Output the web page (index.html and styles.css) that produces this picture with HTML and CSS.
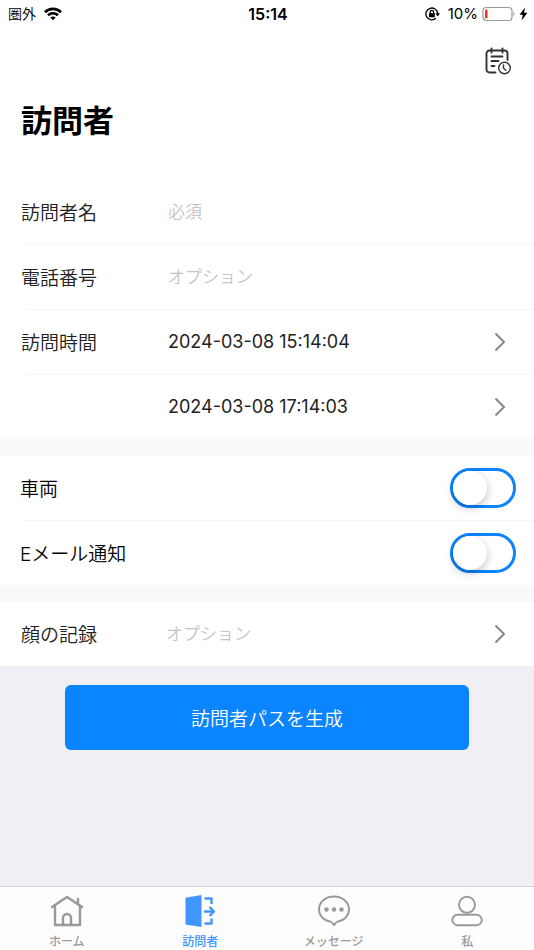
FILE: index.html
```html
<!DOCTYPE html>
<html lang="ja">
<head>
    <meta charset="UTF-8">
    <meta name="viewport" content="width=device-width, initial-scale=1.0">
    <title>訪問者</title>
    <link rel="stylesheet" href="styles.css">
</head>
<body>
    <div class="status-bar">
        <div class="status-left">
            <span>圏外</span>
            <svg width="18" height="14" viewBox="0 0 18 14" fill="none" stroke="#000" stroke-width="2.6">
                <path d="M1 5.2C5.5.8 12.5.8 17 5.2"/>
                <path d="M4 8.3c2.8-2.7 7.2-2.7 10 0"/>
                <path d="M6.4 10.6c1.5-1.4 3.7-1.4 5.2 0L9 13.2z" fill="#000" stroke="none"/>
            </svg>
        </div>
        <div class="status-time">15:14</div>
        <div class="status-right">
            <svg class="lock-icon" width="15" height="14" viewBox="0 0 15 14" fill="none" stroke="#000" stroke-width="1.3">
                <path d="M10.9 11.2A5.9 5.9 0 1 1 12.7 6.5"/>
                <path d="M10.4 6.2H15l-2.3 3.2z" fill="#000" stroke="none"/>
                <path d="M4 6.2h5.8v4.1H4z" fill="#000" stroke="none"/>
                <path d="M5.2 6.5V5a1.7 1.7 0 0 1 3.4 0v1.5"/>
            </svg>
            <span>10%</span>
            <svg width="33" height="16" viewBox="0 0 33 16">
                <rect x="1" y="1.5" width="29" height="13" rx="3.5" fill="none" stroke="#999" stroke-width="1.2"/>
                <rect x="3" y="3.5" width="2.5" height="9" rx="1" fill="#ff2d20"/>
                <path d="M31.5 5.5q2 2.5 0 5z" fill="#999"/>
            </svg>
            <svg width="9" height="14" viewBox="0 0 9 14"><path d="M6 .5.5 7.8h3.3L2.6 13.5 8.5 5.8H5.1z"/></svg>
        </div>
    </div>

    <header class="header">
        <button type="button" class="history-btn" aria-label="履歴">
            <svg width="28" height="28" viewBox="0 0 28 28" fill="none" stroke="#333" stroke-width="1.9" stroke-linecap="round">
                <path d="M11.5 25.5h-6a3 3 0 0 1-3-3v-16a3 3 0 0 1 3-3h15a3 3 0 0 1 3 3V13"/>
                <path d="M7.5 1.5v4M18.5 1.500v4M7.500 9.500h11M7.500 14h7M7.500 19h3"/>
                <circle cx="20.5" cy="21" r="5.8" stroke-width="1.4"/>
                <path d="M19.5 18v3.2l2.3 2" stroke-width="1.4"/>
            </svg>
        </button>
        <h1>訪問者</h1>
    </header>

    <form class="visitor-form">
        <div class="group">
            <div class="row">
                <label for="name">訪問者名</label>
                <input type="text" id="name" class="value" placeholder="必須">
            </div>
            <div class="row">
                <label for="phone">電話番号</label>
                <input type="tel" id="phone" class="value" placeholder="オプション">
            </div>
            <div class="row">
                <label for="start-time">訪問時間</label>
                <button type="button" id="start-time" class="value">
                    2024-03-08 15:14:04
                    <svg class="chevron" width="12" height="20" viewBox="0 0 12 20"><path d="m1.5 1.5 8.5 8.5-8.5 8.5"/></svg>
                </button>
            </div>
            <div class="row">
                <label for="end-time"></label>
                <button type="button" id="end-time" class="value">
                    2024-03-08 17:14:03
                    <svg class="chevron" width="12" height="20" viewBox="0 0 12 20"><path d="m1.5 1.5 8.5 8.5-8.5 8.5"/></svg>
                </button>
            </div>
        </div>

        <div class="group">
            <div class="row row-switch">
                <label for="car">車両</label>
                <input type="checkbox" role="switch" id="car" class="switch">
            </div>
            <div class="row row-switch">
                <label for="email">Eメール通知</label>
                <input type="checkbox" role="switch" id="email" class="switch">
            </div>
        </div>

        <div class="group">
            <div class="row row-face">
                <label for="face">顔の記録</label>
                <button type="button" id="face" class="value value-empty">
                    <span>オプション</span>
                    <svg class="chevron" width="12" height="20" viewBox="0 0 12 20"><path d="m1.5 1.5 8.5 8.5-8.5 8.5"/></svg>
                </button>
            </div>
        </div>

        <div class="actions">
            <button type="submit" class="btn-primary">訪問者パスを生成</button>
        </div>
    </form>

    <nav class="tab-bar">
        <a href="#home" class="tab">
            <svg width="34" height="34" viewBox="0 0 34 34" fill="none" stroke="currentColor" stroke-width="2.4" stroke-linecap="round" stroke-linejoin="round">
                <path d="M2 13 17 3l15 10M5 11.5V31h25V11.5M28 10V5"/>
                <path d="M13 31v-7a4 4 0 0 1 8 0v7"/>
            </svg>
            <span>ホーム</span>
        </a>
        <a href="#visitor" class="tab active">
            <svg width="34" height="34" viewBox="0 0 34 34" fill="none" stroke="currentColor" stroke-width="2.4" stroke-linejoin="round">
                <path d="M2.5 3.7 18.500 1v32l-16-2.500z" fill="currentColor" stroke="none"/>
                <path d="M21.5 4.5h7V10M28.5 24.500v5h-7M21 17.500h10M26.500 13l4.500 4.500-4.500 4.500"/>
            </svg>
            <span>訪問者</span>
        </a>
        <a href="#message" class="tab">
            <svg width="34" height="34" viewBox="0 0 34 34" fill="none" stroke="currentColor" stroke-width="1.9" stroke-linejoin="round">
                <path d="M13.5 27.6C6.5 26.5 2 21.5 2 15.5 2 8 8.5 2.5 17 2.500S32 8 32 15.500c0 6-4.500 11-11.500 12.100-1.500.3-2 1.400-2.500 2.400q-.9 2.200-2 0c-.5-1-1-2.100-2.500-2.400z"/>
                <g fill="currentColor" stroke="none"><circle cx="9.5" cy="15.5" r="2.2"/><circle cx="17" cy="15.5" r="2.2"/><circle cx="24.5" cy="15.5" r="2.2"/></g>
            </svg>
            <span>メッセージ</span>
        </a>
        <a href="#me" class="tab">
            <svg width="34" height="34" viewBox="0 0 34 34" fill="none" stroke="currentColor" stroke-width="1.9">
                <circle cx="17" cy="10.800" r="8"/>
                <rect x="2.3" y="20.8" width="29.5" height="10.4" rx="5.2"/>
            </svg>
            <span>私</span>
        </a>
    </nav>
</body>
</html>
```
FILE: styles.css
```css
:root {
    --blue: #0a84ff;
    --text: #222;
    --placeholder: #c5c5c9;
    --line: #f5f5f5;
    --gap: #f9f9f9;
    --page: #efeff4;
}

* {
    box-sizing: border-box;
}

body {
    display: flex;
    flex-direction: column;
    min-height: 100vh;
    margin: 0;
    background-color: var(--page);
    color: var(--text);
    font-family: Inter, "Noto Sans CJK JP", sans-serif;
    font-weight: 350;
}

button,
input {
    font: inherit;
}

button {
    padding: 0;
    border: none;
    background: none;
    cursor: pointer;
}

svg {
    display: block;
    flex: none;
}

/* Status bar */
.status-bar {
    display: grid;
    grid-template-columns: 1fr auto 1fr;
    align-items: center;
    height: 28px;
    padding: 0 6px 0 8px;
    background-color: #fff;
    color: #000;
    font-size: 14px;
    line-height: 20px;
}

.status-left,
.status-right {
    display: flex;
    align-items: center;
    gap: 8px;
}

.status-right {
    justify-content: flex-end;
    gap: 4px;
    font-size: 15px;
    font-weight: 400;
}

.lock-icon {
    margin-right: 4px;
}

.status-time {
    font-size: 16px;
    font-weight: 600;
}

/* Header */
.header {
    display: flex;
    flex-direction: column;
    height: 152px;
    padding: 19px 22px 0 21px;
    background-color: #fff;
}

.history-btn {
    align-self: flex-end;
}

h1 {
    margin: 22px 0 0;
    color: #000;
    font-size: 31px;
    font-weight: 700;
    line-height: 48px;
}

/* Form */
.visitor-form {
    flex: 1;
}

.group {
    background-color: #fff;
}

.group + .group {
    border-top: 17px solid var(--gap);
}

.row {
    display: flex;
    align-items: center;
    height: 64px;
    padding: 0 28px 0 21px;
}

.row + .row {
    height: 65px;
    background: linear-gradient(var(--line), var(--line)) 26px 0 / 100% 1px no-repeat;
}

.row label {
    flex: none;
    width: 147px;
    padding-top: 4px;
    font-size: 19px;
    line-height: 28px;
}

.value {
    display: flex;
    flex: 1;
    align-items: center;
    justify-content: space-between;
    min-width: 0;
    height: 100%;
    padding: 0;
    border: none;
    outline: none;
    background: none;
    color: var(--text);
    font-size: 18px;
    text-align: left;
}

button.value {
    font-weight: 400;
}

input.value,
button.value-empty {
    font-size: 17px;
    font-weight: 350;
}

.value::placeholder,
.value-empty {
    color: var(--placeholder);
}

.value-empty span {
    padding-bottom: 4px;
}

.row-face label {
    width: 145px;
}

.chevron {
    fill: none;
    stroke: #888;
    stroke-width: 2;
}

.row-switch {
    justify-content: space-between;
    padding: 0 18px 0 20px;
}

.row-switch label {
    width: auto;
    color: #000;
}

.switch {
    appearance: none;
    width: 66px;
    height: 40px;
    margin: 0;
    border: 3px solid var(--blue);
    border-radius: 20px;
    background-color: #fff;
    cursor: pointer;
}

.switch::before {
    content: "";
    display: block;
    width: 34px;
    height: 34px;
    border-radius: 50%;
    background-color: #fff;
    box-shadow: 0 3px 8px rgba(0, 0, 0, 0.25);
}

.switch:checked {
    background-color: var(--blue);
}

.switch:checked::before {
    margin-left: auto;
}

.actions {
    padding: 19px 65px;
}

.btn-primary {
    width: 100%;
    height: 65px;
    border-radius: 6px;
    background-color: var(--blue);
    color: #fff;
    font-size: 19px;
}

/* Bottom tabs */
.tab-bar {
    display: grid;
    grid-template-columns: repeat(4, 1fr);
    height: 64px;
    border-top: 1px solid #d2d2d4;
    background-color: #fdfdfd;
}

.tab {
    display: flex;
    flex-direction: column;
    align-items: center;
    gap: 5px;
    padding-top: 7px;
    color: #999;
    font-size: 12px;
    font-weight: 500;
    line-height: 18px;
    text-decoration: none;
}

.tab.active {
    color: #4096ff;
}
```
